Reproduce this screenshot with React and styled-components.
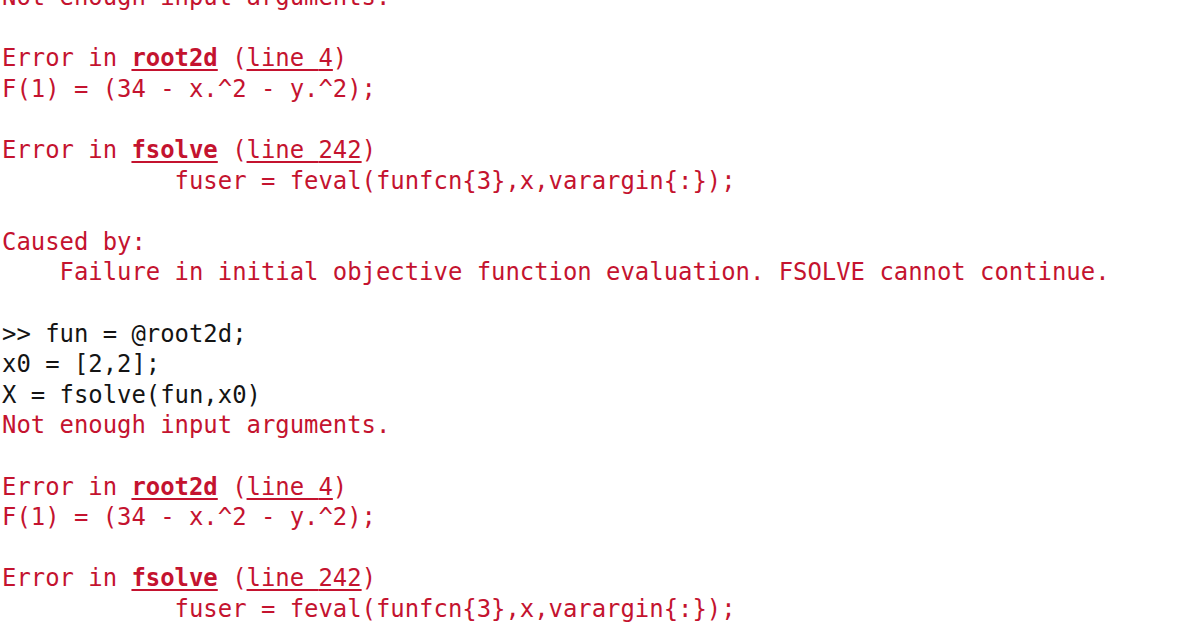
import React from 'react';
import styled, { createGlobalStyle } from 'styled-components';

const GlobalStyle = createGlobalStyle`
  html, body {
    margin: 0;
    padding: 0;
    background: #ffffff;
    overflow: hidden;
  }
`;

const Console = styled.div`
  width: 1196px;
  height: 628px;
  overflow: hidden;
  background: #ffffff;
`;

const Output = styled.pre`
  margin: -18px 0 0 0;
  padding: 0 0 0 2px;
  font-family: 'DejaVu Sans Mono', 'Liberation Mono', monospace;
  font-size: 23.9px;
  line-height: 30.6px;
  white-space: pre;
`;

const Line = styled.div`
  height: 30.6px;
  color: ${({ $tone }) => ($tone === 'error' ? '#c4132f' : '#141414')};
`;

const Link = styled.span`
  font-weight: ${({ $bold }) => ($bold ? 700 : 400)};
  text-decoration: underline;
  text-decoration-thickness: 2px;
  text-underline-offset: 3px;
`;

const ErrorIn = ({ fn, line }) => (
  <Line $tone="error">
    Error in <Link $bold>{fn}</Link> (<Link>line {line}</Link>)
  </Line>
);

const App = () => {
  return (
    <>
      <GlobalStyle />
      <Console>
        <Output>
          <Line $tone="error">Not enough input arguments.</Line>
          <Line />
          <ErrorIn fn="root2d" line="4" />
          <Line $tone="error">F(1) = (34 - x.^2 - y.^2);</Line>
          <Line />
          <ErrorIn fn="fsolve" line="242" />
          <Line $tone="error">{'            fuser = feval(funfcn{3},x,varargin{:});'}</Line>
          <Line />
          <Line $tone="error">Caused by:</Line>
          <Line $tone="error">{'    Failure in initial objective function evaluation. FSOLVE cannot continue.'}</Line>
          <Line />
          <Line>{'>> fun = @root2d;'}</Line>
          <Line>x0 = [2,2];</Line>
          <Line>X = fsolve(fun,x0)</Line>
          <Line $tone="error">Not enough input arguments.</Line>
          <Line />
          <ErrorIn fn="root2d" line="4" />
          <Line $tone="error">F(1) = (34 - x.^2 - y.^2);</Line>
          <Line />
          <ErrorIn fn="fsolve" line="242" />
          <Line $tone="error">{'            fuser = feval(funfcn{3},x,varargin{:});'}</Line>
        </Output>
      </Console>
    </>
  );
};

export default App;
